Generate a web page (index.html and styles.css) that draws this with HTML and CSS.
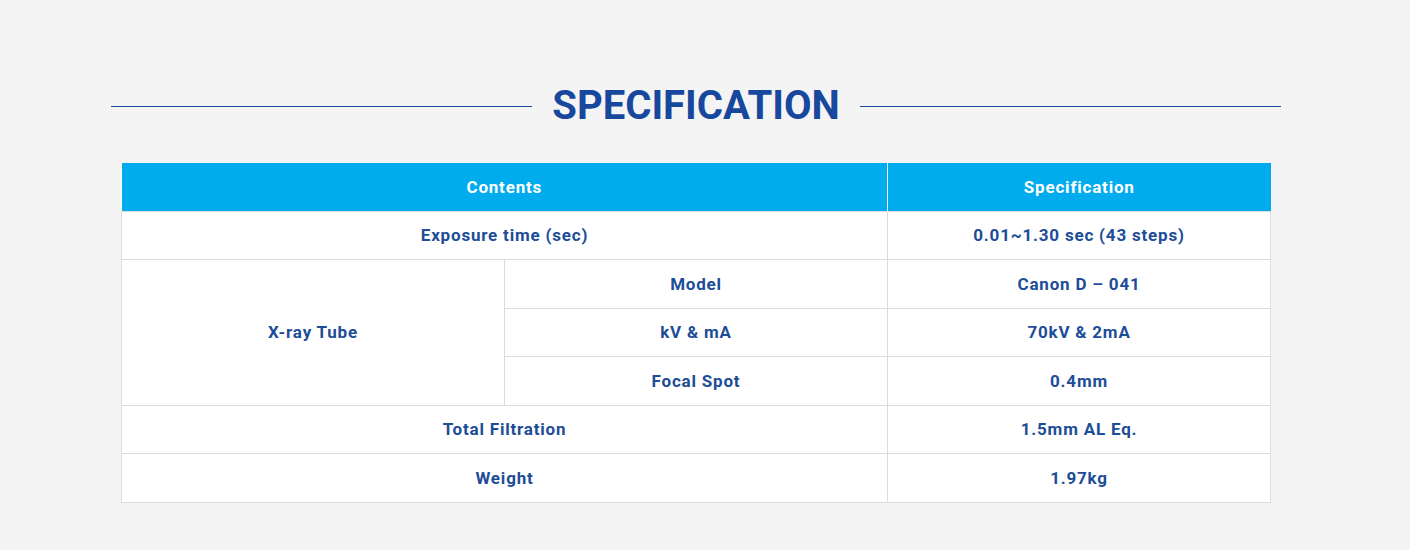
FILE: index.html
```html
<!DOCTYPE html>
<html lang="en">
<head>
<meta charset="utf-8">
<title>Specification</title>
<link rel="stylesheet" href="styles.css">
</head>
<body>
<section class="spec">
  <div class="spec-title">
    <span class="spec-line"></span>
    <h2 class="spec-heading">SPECIFICATION</h2>
    <span class="spec-line"></span>
  </div>
  <table class="spec-table">
    <colgroup>
      <col class="col">
      <col class="col">
      <col class="col">
    </colgroup>
    <thead>
      <tr>
        <th colspan="2">Contents</th>
        <th>Specification</th>
      </tr>
    </thead>
    <tbody>
      <tr>
        <td colspan="2">Exposure time (sec)</td>
        <td>0.01~1.30 sec (43 steps)</td>
      </tr>
      <tr>
        <td rowspan="3">X-ray Tube</td>
        <td>Model</td>
        <td>Canon D – 041</td>
      </tr>
      <tr>
        <td>kV &amp; mA</td>
        <td>70kV &amp; 2mA</td>
      </tr>
      <tr>
        <td>Focal Spot</td>
        <td>0.4mm</td>
      </tr>
      <tr>
        <td colspan="2">Total Filtration</td>
        <td>1.5mm AL Eq.</td>
      </tr>
      <tr>
        <td colspan="2">Weight</td>
        <td>1.97kg</td>
      </tr>
    </tbody>
  </table>
</section>
</body>
</html>
```

FILE: styles.css
```css
html, body {
  margin: 0;
  padding: 0;
}
body {
  background: #f4f4f4;
  font-family: Roboto, "Liberation Sans", Arial, sans-serif;
  color: #1d4d97;
}
.spec {
  width: 1170px;
  margin-left: 111px;
  padding-top: 78px;
  padding-bottom: 48px;
}
.spec-title {
  display: flex;
  align-items: center;
  gap: 20px;
}
.spec-line {
  flex: 1;
  height: 1px;
  background: #1b4b9b;
}
.spec-heading {
  margin: 0;
  font-size: 40px;
  line-height: 56px;
  font-weight: 700;
  color: #17489d;
  letter-spacing: 0;
}
.spec-table {
  margin: 29px 10px 0;
  width: 1150px;
  table-layout: fixed;
  border-collapse: collapse;
  background: #fff;
}
.spec-table .col {
  width: 383px;
}
.spec-table th {
  background: #00acee;
  color: #fff;
  font-size: 17px;
  font-weight: 700;
  letter-spacing: 0.8px;
  height: 47.5px;
  padding: 0;
  border-left: 1px solid #e6f5fc;
}
.spec-table th:first-child {
  border-left: none;
}
.spec-table td {
  text-align: center;
  font-size: 17px;
  font-weight: 700;
  letter-spacing: 0.8px;
  height: 47.5px;
  padding: 0;
  border: 1px solid #dcdcdc;
}
```
